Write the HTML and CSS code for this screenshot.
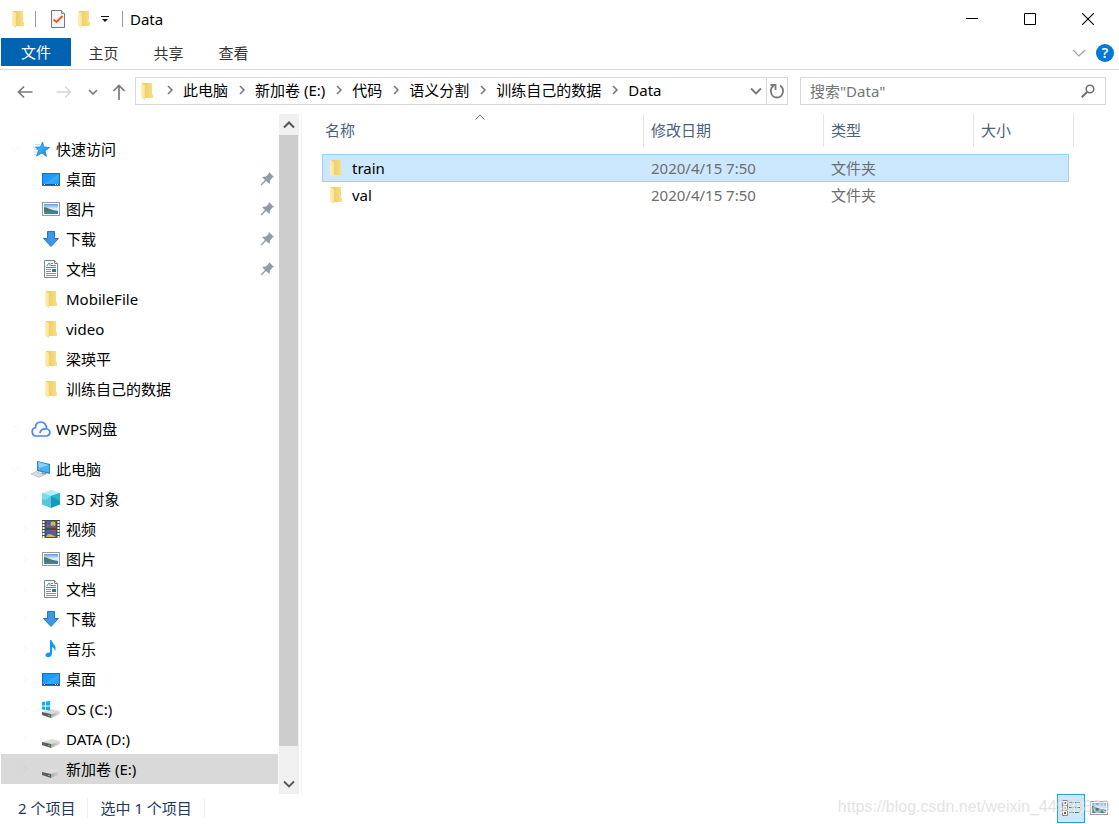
FILE: index.html
```
<!DOCTYPE html>
<html lang="zh-CN">
<head>
<meta charset="utf-8">
<title>Data</title>
<link rel="stylesheet" href="styles.css">
</head>
<body>
<svg class="sprite" aria-hidden="true">
  <defs>
    <linearGradient id="gFolder" x1="0" x2="1"><stop offset="0" stop-color="#eac863"/><stop offset="1" stop-color="#fbdf87"/></linearGradient>
    <linearGradient id="gFlap" x1="0" x2="1"><stop offset="0" stop-color="#fff0b8"/><stop offset="1" stop-color="#ffe190"/></linearGradient>
    <linearGradient id="gDesk" x1="0" y1="0" x2="1" y2="1"><stop offset="0" stop-color="#1b97f3"/><stop offset=".5" stop-color="#1e9dfa"/><stop offset=".52" stop-color="#38abff"/><stop offset="1" stop-color="#1c98f5"/></linearGradient>
    <linearGradient id="gSky" x1="0" y1="0" x2="0" y2="1"><stop offset="0" stop-color="#5c9ce8"/><stop offset=".5" stop-color="#e6f3fb"/><stop offset="1" stop-color="#8fc4e6"/></linearGradient>
    <linearGradient id="gDrive" x1="0" x2="1"><stop offset="0" stop-color="#a9a9a9"/><stop offset="1" stop-color="#dedede"/></linearGradient>
    <linearGradient id="gStar" x1="0" y1="0" x2="1" y2="1"><stop offset="0" stop-color="#5cc5fb"/><stop offset="1" stop-color="#0b84dc"/></linearGradient>
  </defs>
  <symbol id="folder" viewBox="0 0 18 18">
    <path d="M4 1H14V12L15 12.500V16H5Z" fill="url(#gFolder)"/>
    <path d="M3 1L7 3V18L3 15.500Z" fill="url(#gFlap)"/>
  </symbol>
  <symbol id="star" viewBox="0 0 18 18">
    <path d="M10.500 2L12 7L17.500 7.500L13 10.700L14.500 16.500L10 13L4.500 16L6.500 10.500L3.500 7H8.500Z" fill="url(#gStar)" stroke="#1781c9" stroke-width=".8"/>
    <path d="M3 4.500H8M1 7H4M2 9.500H5M1 12H5M2 14.500H4" stroke="#a5d8f7" stroke-width=".8"/>
  </symbol>
  <symbol id="desktop" viewBox="0 0 18 18">
    <rect x=".5" y="3.500" width="17" height="12" fill="url(#gDesk)" stroke="#0b75c2"/>
    <path d="M1 14.500H17" stroke="#075b9d"/>
    <path d="M2 14.500H3M13 14.500H14M15 14.500H16" stroke="#fff"/>
  </symbol>
  <symbol id="picture" viewBox="0 0 18 18">
    <rect x=".5" y="2.500" width="17" height="13" fill="#fff" stroke="#999"/>
    <rect x="2" y="4" width="14" height="10" fill="url(#gSky)"/>
    <path d="M2 7C5 7 8 10 16 11V12H2Z" fill="#4a7a63"/>
    <path d="M2 12.500C7 10.500 11 11 16 12V14H2Z" fill="#3e7fb0"/>
  </symbol>
  <symbol id="down" viewBox="0 0 18 18">
    <path d="M5.500 1.500H12.500V8.500H16.500L9 16.500L1.500 8.500H5.500Z" fill="#3d97e6" stroke="#2579c4"/>
  </symbol>
  <symbol id="doc" viewBox="0 0 18 18">
    <path d="M2.500 .500H12.500L15.500 3.500V17.500H2.500Z" fill="#fff" stroke="#858585"/>
    <path d="M12.500 .500V3.500H15.500" fill="#ddd" stroke="#858585"/>
    <path d="M5 6L6.500 3.500H8V6M9 3.500H11M9 5.500H14M4 7.500H14" stroke="#2395d2" fill="none"/>
    <path d="M4 9.500H9M4 11.500H9M4 13.500H14M4 15.500H14" stroke="#8d8d8d"/>
    <rect x="10" y="9" width="4" height="3" fill="#2b7aa5"/>
  </symbol>
  <symbol id="cloud" viewBox="0 0 20 18">
    <path d="M5 16H15.500C19.800 15.500 20.200 9.500 15.500 9C16 4.800 13 2 9.800 2C6.400 2 4.300 4.500 4.500 7.500C-.2 8.500 .3 15.500 5 16ZM9 12.500C10 9.500 12.500 8.500 15.500 9" fill="none" stroke="#4a86f0" stroke-width="1.700" stroke-linecap="round"/>
  </symbol>
  <symbol id="pc" viewBox="0 0 20 18">
    <path d="M6 1L19 4V14L6 11Z" fill="#2d83c6"/><path d="M7 2L18 5V12.500L7 10Z" fill="#47b1f4"/><path d="M7 2L18 5L8 8Z" fill="#86d1fb"/>
    <path d="M11 12L16 13.500L14 15L10 13.500Z" fill="#999"/>
    <path d="M0 14L5 11.500L13 15L8 17.500Z" fill="#d8dde1" stroke="#aab0b5" stroke-width=".6"/>
  </symbol>
  <symbol id="cube" viewBox="0 0 18 18">
    <path d="M9 0L18 3L9 6L0 3Z" fill="#b4edf3"/><path d="M0 3L9 6V18L0 14.500Z" fill="#55c6dc"/><path d="M18 3L9 6V18L18 14.500Z" fill="#159bb7"/>
    <path d="M0 3L9 6L4 10L0 9Z" fill="#7bdbe8"/><path d="M18 3L9 6L18 11Z" fill="#2bb5cd"/>
  </symbol>
  <symbol id="film" viewBox="0 0 18 18">
    <path d="M0 0H18V18H0Z" fill="#4b4b4b"/>
    <path d="M1.500 1V18M16.500 1V18" stroke="#fff" stroke-width="2" stroke-dasharray="2 1"/>
    <path d="M4 1H14V8H4ZM4 10H14V17H4Z" fill="#3265bb"/>
    <circle cx="11" cy="4" r="2.500" fill="#e6b52c"/><path d="M9 6H13L11 8Z" fill="#cf3527"/>
    <circle cx="6" cy="6" r="1.500" fill="#c54e38"/><path d="M8 10H14L11 13Z" fill="#d53b2b"/>
    <path d="M4 17C6 12 9 14 14 17Z" fill="#e2b23b"/><circle cx="11" cy="6" r="1" fill="#4f9b44"/>
  </symbol>
  <symbol id="music" viewBox="0 0 18 18">
    <path d="M8 0H9.500C10 4 15.500 5 13 11.500C12.800 8.500 11 7.500 10 7V13.500C10 16.500 7 18 5 17C2 15.800 3.500 12 8 12.500Z" fill="#119bf0"/>
  </symbol>
  <symbol id="drive" viewBox="0 0 18 18">
    <path d="M0 12L10 9L18 11L9 14Z" fill="#dcdcdc"/>
    <path d="M0 12L9 14V18L0 15Z" fill="#5c5c5c"/>
    <path d="M9 14L18 11V14L9 18Z" fill="url(#gDrive)"/>
    <path d="M6 15.500H8" stroke="#48d164"/>
  </symbol>
  <symbol id="osdrive" viewBox="0 0 18 18">
    <use href="#drive" width="18" height="18"/>
    <path d="M0 2L3 1.600V5.500H0ZM4 1.500L8 1V5.500H4ZM0 6.500H3V10L0 9.500ZM4 6.500H8V10.500L4 10Z" fill="#0bb1ee"/>
  </symbol>
  <symbol id="pin" viewBox="0 0 14 14">
    <path d="M9 0L14 5L12.500 5.500L10 8.500L9.500 12L6 9L1.500 13.500L.5 12.500L5 8L2 5L6 4.500L8.500 2Z" fill="#919ca6"/>
  </symbol>
  <symbol id="chevR" viewBox="0 0 10 10"><path d="M3 1L7 5L3 9" fill="none" stroke="currentColor" stroke-width="1.500"/></symbol>
  <symbol id="chevD" viewBox="0 0 12 8"><path d="M1 1.500L6 6.500L11 1.500" fill="none" stroke="currentColor" stroke-width="1.800"/></symbol>
  <symbol id="chevU" viewBox="0 0 12 8"><path d="M1 6.500L6 1.500L11 6.500" fill="none" stroke="currentColor" stroke-width="2"/></symbol>
</svg>

<div class="window">
  <header class="titlebar">
    <svg class="icon"><use href="#folder"/></svg>
    <span class="title-rule"></span>
    <button class="quick" aria-label="属性"><svg class="icon" viewBox="0 0 18 18"><path d="M2.500 .500H12.500L15.500 3.500V17.500H2.500Z" fill="#f5f5f7" stroke="#777"/><path d="M12.500 .500V3.500H15.500" fill="#ddd" stroke="#888"/><path d="M4.500 9.500L7.500 12L13.500 6" fill="none" stroke="#e9591f" stroke-width="2"/></svg></button>
    <button class="quick" aria-label="新建文件夹"><svg class="icon"><use href="#folder"/></svg></button>
    <button class="quick" aria-label="自定义快速访问工具栏"><svg class="customize" viewBox="0 0 8 8"><path d="M0 1.500H8" stroke="#111"/><path d="M1 4H7L4 7Z" fill="#111"/></svg></button>
    <span class="title-rule title-rule-last"></span>
    <h1 class="title">Data</h1>
    <div class="controls">
      <button class="control" aria-label="最小化"><svg viewBox="0 0 12 12"><path d="M0 5.500H12" stroke="#000"/></svg></button>
      <button class="control" aria-label="最大化"><svg viewBox="0 0 12 12"><path d="M.5 .500H11.500V11.500H.5Z" fill="none" stroke="#000"/></svg></button>
      <button class="control" aria-label="关闭"><svg viewBox="0 0 12 12"><path d="M0 0L12 12M12 0L0 12" stroke="#000" stroke-width="1.100"/></svg></button>
    </div>
  </header>

  <div class="ribbon">
    <button class="tab tab-file">文件</button>
    <button class="tab">主页</button>
    <button class="tab">共享</button>
    <button class="tab">查看</button>
    <div class="ribbon-end">
      <button class="ribbon-toggle" aria-label="展开功能区"><svg class="chev-thin" viewBox="0 0 14 8"><path d="M1 1L7 7L13 1" fill="none" stroke="#a0a0a0" stroke-width="1.200"/></svg></button>
      <button class="help" aria-label="帮助">?</button>
    </div>
  </div>

  <div class="navbar">
    <div class="history">
      <button class="nav-btn" aria-label="后退"><svg viewBox="0 0 16 16"><path d="M15.500 8H1.500M7 2.500L1.500 8L7 13.500" fill="none" stroke="#7a7a7a" stroke-width="1.700"/></svg></button>
      <button class="nav-btn nav-forward" aria-label="前进" disabled><svg viewBox="0 0 16 16"><path d="M.5 8H14.500M9 2.500L14.500 8L9 13.500" fill="none" stroke="#d6d6d6" stroke-width="1.600"/></svg></button>
      <button class="nav-btn nav-recent" aria-label="最近浏览的位置"><svg viewBox="0 0 10 16"><path d="M1 6L5 10L9 6" fill="none" stroke="#7a7a7a" stroke-width="1.700"/></svg></button>
      <button class="nav-btn nav-up" aria-label="向上"><svg viewBox="0 0 14 16"><path d="M7 16V1.500M1.500 7L7 1.500L12.500 7" fill="none" stroke="#7a7a7a" stroke-width="1.700"/></svg></button>
    </div>
    <div class="address">
      <svg class="icon"><use href="#folder"/></svg>
      <nav class="crumbs" aria-label="地址">
        <svg class="sep"><use href="#chevR"/></svg><a href="#">此电脑</a>
        <svg class="sep"><use href="#chevR"/></svg><a href="#">新加卷 (E:)</a>
        <svg class="sep"><use href="#chevR"/></svg><a href="#">代码</a>
        <svg class="sep"><use href="#chevR"/></svg><a href="#">语义分割</a>
        <svg class="sep"><use href="#chevR"/></svg><a href="#">训练自己的数据</a>
        <svg class="sep"><use href="#chevR"/></svg><a href="#">Data</a>
      </nav>
      <button class="address-btn" aria-label="以前的位置"><svg class="chev"><use href="#chevD"/></svg></button>
      <button class="address-btn refresh" aria-label="刷新"><svg class="refresh-icon" viewBox="0 0 16 16"><path d="M11 2.500C16 5.500 14.500 14.500 8 14.500C1.500 14.500 0 6 4.500 3" fill="none" stroke="#7a7a7a" stroke-width="1.800"/><path d="M1.500 2H6.500V7" fill="none" stroke="#7a7a7a" stroke-width="1.800"/></svg></button>
    </div>
    <label class="search">
      <input class="search-input" type="text" placeholder="搜索&quot;Data&quot;" aria-label="搜索">
      <svg class="search-icon" viewBox="0 0 14 14"><circle cx="9" cy="5" r="3.800" fill="none" stroke="#707070" stroke-width="1.600"/><path d="M6.300 7.700L.8 13.200" stroke="#707070" stroke-width="2"/></svg>
    </label>
  </div>

  <div class="content">
    <nav class="sidebar" aria-label="导航窗格">
      <div class="tree">
        <ul class="group">
          <li><a class="item root" href="#"><svg class="twist open"><use href="#chevR"/></svg><svg class="icon icon-wide"><use href="#star"/></svg>快速访问</a></li>
          <li><a class="item" href="#"><svg class="icon"><use href="#desktop"/></svg>桌面<svg class="pin"><use href="#pin"/></svg></a></li>
          <li><a class="item" href="#"><svg class="icon"><use href="#picture"/></svg>图片<svg class="pin"><use href="#pin"/></svg></a></li>
          <li><a class="item" href="#"><svg class="icon"><use href="#down"/></svg>下载<svg class="pin"><use href="#pin"/></svg></a></li>
          <li><a class="item" href="#"><svg class="icon"><use href="#doc"/></svg>文档<svg class="pin"><use href="#pin"/></svg></a></li>
          <li><a class="item" href="#"><svg class="icon"><use href="#folder"/></svg>MobileFile</a></li>
          <li><a class="item" href="#"><svg class="icon"><use href="#folder"/></svg>video</a></li>
          <li><a class="item" href="#"><svg class="icon"><use href="#folder"/></svg>梁瑛平</a></li>
          <li><a class="item" href="#"><svg class="icon"><use href="#folder"/></svg>训练自己的数据</a></li>
        </ul>
        <ul class="group">
          <li><a class="item root" href="#"><svg class="twist"><use href="#chevR"/></svg><svg class="icon icon-wide"><use href="#cloud"/></svg>WPS网盘</a></li>
        </ul>
        <ul class="group">
          <li><a class="item root" href="#"><svg class="twist open"><use href="#chevR"/></svg><svg class="icon icon-wide"><use href="#pc"/></svg>此电脑</a></li>
          <li><a class="item" href="#"><svg class="twist"><use href="#chevR"/></svg><svg class="icon"><use href="#cube"/></svg>3D 对象</a></li>
          <li><a class="item" href="#"><svg class="twist"><use href="#chevR"/></svg><svg class="icon"><use href="#film"/></svg>视频</a></li>
          <li><a class="item" href="#"><svg class="twist"><use href="#chevR"/></svg><svg class="icon"><use href="#picture"/></svg>图片</a></li>
          <li><a class="item" href="#"><svg class="twist"><use href="#chevR"/></svg><svg class="icon"><use href="#doc"/></svg>文档</a></li>
          <li><a class="item" href="#"><svg class="twist"><use href="#chevR"/></svg><svg class="icon"><use href="#down"/></svg>下载</a></li>
          <li><a class="item" href="#"><svg class="twist"><use href="#chevR"/></svg><svg class="icon"><use href="#music"/></svg>音乐</a></li>
          <li><a class="item" href="#"><svg class="twist"><use href="#chevR"/></svg><svg class="icon"><use href="#desktop"/></svg>桌面</a></li>
          <li><a class="item" href="#"><svg class="twist"><use href="#chevR"/></svg><svg class="icon"><use href="#osdrive"/></svg>OS (C:)</a></li>
          <li><a class="item" href="#"><svg class="twist"><use href="#chevR"/></svg><svg class="icon"><use href="#drive"/></svg>DATA (D:)</a></li>
          <li><a class="item current" href="#" aria-current="true"><svg class="twist"><use href="#chevR"/></svg><svg class="icon"><use href="#drive"/></svg>新加卷 (E:)</a></li>
        </ul>
      </div>
      <div class="scrollbar">
        <button class="scroll-btn" aria-label="向上滚动"><svg class="chev"><use href="#chevU"/></svg></button>
        <div class="thumb"></div>
        <button class="scroll-btn" aria-label="向下滚动"><svg class="chev"><use href="#chevD"/></svg></button>
      </div>
    </nav>

    <main class="files">
      <table class="file-table">
        <colgroup><col class="col-name"><col class="col-date"><col class="col-type"><col class="col-size"><col class="col-end"></colgroup>
        <thead>
          <tr>
            <th class="sorted" aria-sort="ascending">名称<svg class="sort" viewBox="0 0 12 6"><path d="M1.500 5.500L6 1L10.500 5.500" fill="none" stroke="#777"/></svg></th>
            <th>修改日期</th><th>类型</th><th colspan="2">大小</th>
          </tr>
        </thead>
        <tbody>
          <tr class="selected"><td><span class="file"><svg class="icon"><use href="#folder"/></svg>train</span></td><td>2020/4/15 7:50</td><td>文件夹</td><td></td></tr>
          <tr><td><span class="file"><svg class="icon"><use href="#folder"/></svg>val</span></td><td>2020/4/15 7:50</td><td>文件夹</td><td></td></tr>
        </tbody>
      </table>
    </main>
  </div>

  <footer class="status">
    <span class="status-text">2 个项目</span>
    <span class="status-text">选中 1 个项目</span>
    <div class="views">
      <button class="view view-on" aria-label="详细信息"><svg class="view-icon" viewBox="0 0 18 18"><path d="M.5 1.500H5.500V16.500H.5ZM.5 6.500H5.500M.5 11.500H5.500" fill="#fff" stroke="#888"/><path d="M2 4H4" stroke="#2878a8" stroke-width="2"/><path d="M2 9H4" stroke="#d8a33f" stroke-width="2"/><path d="M2 14H4" stroke="#bd3a22" stroke-width="2"/><path d="M7 3.500H18M7 8.500H18M7 13.500H18" stroke="#666" stroke-dasharray="5 1"/></svg></button>
      <button class="view" aria-label="大缩略图"><svg class="view-icon"><use href="#picture"/></svg></button>
      <span class="watermark">https://blog.csdn.net/weixin_44936889</span>
    </div>
  </footer>
</div>
</body>
</html>
```

FILE: styles.css
```
* { box-sizing: border-box; }

body {
  margin: 0;
  background: #fff;
  color: #000;
  font: 15px/20px "Noto Sans", "Noto Sans CJK SC", sans-serif;
}

button {
  display: flex;
  align-items: center;
  justify-content: center;
  padding: 0;
  border: 0;
  background: none;
  color: inherit;
  font: inherit;
}

a { color: inherit; text-decoration: none; }
ul { margin: 0; padding: 0; list-style: none; }
svg { display: block; flex: none; }

.sprite { position: absolute; width: 0; height: 0; }
.icon { width: 18px; height: 18px; }
.icon-wide { width: 20px; }

.window {
  display: flex;
  flex-direction: column;
  min-height: 100vh;
}

/* Title bar */
.titlebar {
  display: flex;
  align-items: center;
  height: 38px;
  padding-left: 9px;
}
.title-rule { width: 1px; height: 16px; margin: 0 13px 0 8px; background: #999; }
.title-rule-last { margin: 0 7px 0 5px; }
.quick { margin-right: 8px; }
.customize { width: 8px; height: 8px; }
.title { margin: 0; font-size: 15px; font-weight: 400; }
.controls { display: flex; margin-left: auto; padding-right: 2px; }
.control { width: 58px; height: 38px; }
.control svg { width: 12px; height: 12px; }

/* Ribbon */
.ribbon {
  display: flex;
  height: 32px;
  padding-left: 1px;
  border-bottom: 1px solid #dadada;
}
.tab { width: 65px; height: 29px; color: #333; }
.tab-file { width: 70px; height: 28px; background: #0063b1; color: #fff; }
.ribbon-end {
  display: flex;
  align-items: center;
  gap: 10px;
  height: 30px;
  margin-left: auto;
  padding-right: 5px;
}
.chev-thin { width: 14px; height: 8px; }
.help {
  width: 18px;
  height: 18px;
  border-radius: 50%;
  background: #0078d7;
  color: #fff;
  font-size: 14px;
  font-weight: 600;
}

/* Navigation bar */
.navbar {
  display: flex;
  gap: 12px;
  height: 44px;
  padding: 7px 13px 9px 17px;
}
.history { display: flex; align-items: center; width: 106px; padding-top: 2px; }
.nav-btn svg { width: 16px; height: 16px; }
.nav-forward { margin-left: 23px; }
.nav-recent { margin-left: 16px; }
.nav-recent svg { width: 10px; }
.nav-up { margin-left: 14px; }
.nav-up svg { width: 14px; }
.address {
  display: flex;
  flex: 1;
  align-items: center;
  min-width: 0;
  padding-left: 2px;
  border: 1px solid #d9d9d9;
}
.crumbs {
  display: flex;
  flex: 1;
  align-items: center;
  min-width: 0;
  padding-bottom: 2px;
  overflow: hidden;
  white-space: nowrap;
}
.sep { width: 10px; height: 10px; margin: 0 8px 0 9px; color: #777; }
.address-btn { width: 20px; height: 26px; color: #777; }
.refresh { border-left: 1px solid #d9d9d9; width: 21px; }
.refresh-icon { width: 16px; height: 16px; }
.chev { width: 12px; height: 8px; }
.search {
  display: flex;
  flex: 0 1 306px;
  align-items: center;
  padding: 0 10px 0 9px;
  border: 1px solid #d9d9d9;
}
.search-input {
  flex: 1;
  min-width: 0;
  padding: 0;
  border: 0;
  outline: 0;
  background: none;
  font: inherit;
}
.search-input::placeholder { color: #757575; opacity: 1; }
.search-icon { width: 14px; height: 14px; }

/* Navigation pane */
.content { display: flex; flex: 1; }
.sidebar {
  display: flex;
  flex: none;
  width: 302px;
  padding-right: 2px;
  border-right: 1px solid #f2f2f2;
}
.tree {
  display: flex;
  flex: 1;
  flex-direction: column;
  gap: 10px;
  padding: 20px 1px 10px;
}
.item {
  position: relative;
  display: flex;
  align-items: center;
  gap: 6px;
  height: 30px;
  padding: 0 4px 0 41px;
}
.root { gap: 5px; padding-left: 30px; }
.current { background: #d9d9d9; }
.twist {
  position: absolute;
  left: 19px;
  width: 10px;
  height: 10px;
  color: #fafafa;
}
.root .twist { left: 9px; }
.open { transform: rotate(90deg); }
.current .twist { color: #d4d4d4; }
.pin { width: 14px; height: 14px; margin-left: auto; }
.scrollbar {
  display: flex;
  flex-direction: column;
  width: 20px;
  background: #f0f0f0;
}
.scroll-btn { width: 19px; height: 21px; color: #555; }
.thumb { flex: 1; width: 19px; margin-bottom: 27px; background: #cdcdcd; }

/* File list */
.files { flex: 1; min-width: 0; padding-left: 20px; }
.file-table { width: 752px; border-collapse: separate; border-spacing: 0; table-layout: fixed; }
.col-name { width: 322px; }
.col-date { width: 180px; }
.col-type { width: 150px; }
.col-size { width: 95px; }
.col-end { width: 5px; }
.file-table th {
  height: 33px;
  padding: 0 0 2px 7px;
  border-right: 1px solid #e5e5e5;
  color: #4c607a;
  font-weight: 400;
  text-align: left;
}
.file-table .sorted { position: relative; padding-left: 3px; }
.sort {
  position: absolute;
  top: 0;
  left: 152px;
  width: 12px;
  height: 6px;
}
.file-table tbody::before { content: ""; display: block; height: 7px; }
.file-table td {
  height: 26px;
  padding: 0 0 0 7px;
  color: #6d6d6d;
}
.file-table td:first-child { padding-left: 5px; color: #000; }
.file { display: flex; align-items: center; gap: 7px; }
.file-table .selected td {
  height: 28px;
  border: solid #99d1ff;
  border-width: 1px 0;
  background: #cce8ff;
}
.file-table .selected td:last-child { border-right-width: 1px; }
.file-table .selected td:first-child { padding-left: 4px; border-left-width: 1px; }

/* Status bar */
.status {
  display: flex;
  align-items: center;
  height: 30px;
  padding: 0 6px 2px 18px;
  color: #1e395b;
}
.status-text { margin-right: 12px; padding-right: 12px; border-right: 1px solid #f0f0f0; }
.views { position: relative; display: flex; margin-left: auto; }
.view { width: 28px; height: 29px; }
.view-on { border: 1px solid #26a0da; background: #cbe8f6; }
.view-icon { width: 18px; height: 18px; }
.watermark {
  position: absolute;
  right: 3px;
  bottom: 6px;
  color: rgba(215, 215, 215, 0.7);
  font: 16px/20px "Liberation Sans", Arial, sans-serif;
  text-shadow: 1px 1px 0 rgba(255, 255, 255, 0.5);
  white-space: nowrap;
  pointer-events: none;
}
```
